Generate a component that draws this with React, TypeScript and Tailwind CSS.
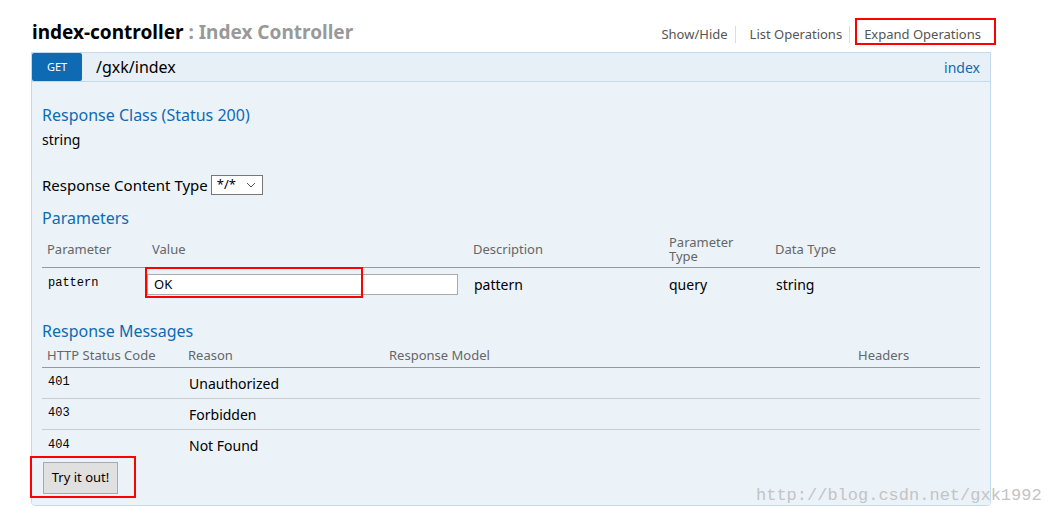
import React from "react";

const headCell = "pl-[5px] text-[13px] text-[#666] leading-[14px]";
const mono = "font-['Liberation_Mono',monospace] text-[12px] text-black";

function RedBox({ className }: { className: string }) {
  return <div className={`absolute border-2 border-[#ff0000] pointer-events-none ${className}`} />;
}

const messages = [
  { code: "401", reason: "Unauthorized" },
  { code: "403", reason: "Forbidden" },
  { code: "404", reason: "Not Found" },
];

export default function App() {
  return (
    <div className="relative w-[1050px] h-[516px] overflow-hidden bg-white font-['Noto_Sans',sans-serif] text-[#333]">
      <div className="ml-[31px] w-[960px] pt-[20px]">
        {/* resource heading */}
        <div className="flex items-baseline justify-between mb-[8px] h-[24px]">
          <h2 className="pl-[1px] text-[19px] leading-[24px] font-bold text-black">
            index-controller
            <span className="text-[#999]"> : Index Controller</span>
          </h2>
          <div className="flex items-center text-[13px] leading-[17px] text-[#555]">
            <span className="pr-[7px]">Show/Hide</span>
            <span className="pl-[14px] pr-[7px] border-l border-[#ddd]">List Operations</span>
            <span className="pl-[14px] pr-[10px] border-l border-[#ddd]">Expand Operations</span>
          </div>
        </div>

        {/* operation panel */}
        <div className="border border-[#c3d9ec] rounded-b-[4px] overflow-hidden">
          <div className="flex items-center h-[29px] bg-[#e7f0f7] border-b border-[#c3d9ec]">
            <span className="flex items-center justify-center w-[50px] h-[28px] bg-[#0f6ab4] rounded-[2px] text-white text-[11px]">
              GET
            </span>
            <span className="ml-[14px] text-[16px] text-black">/gxk/index</span>
            <span className="ml-auto pr-[10px] text-[14px] text-[#0f6ab4]">index</span>
          </div>

          <div className="bg-[#ebf3f9] px-[10px] pt-[23px] pb-[11px]">
            <h4 className="text-[16px] leading-[20px] text-[#0f6ab4]">Response Class (Status 200)</h4>
            <p className="mt-[5px] text-[14px] leading-[20px] text-black">string</p>

            <div className="mt-[25px] flex items-center h-[20px] text-[15px] text-black">
              <span>Response Content Type</span>
              <span className="ml-[3px] flex items-center w-[52px] h-[20px] border border-[#777] bg-white pl-[5px] text-[13px]">
                */*
                <svg className="ml-auto mr-[6px]" width="10" height="6" viewBox="0 0 10 6" fill="none">
                  <path d="M1 1l4 4 4-4" stroke="#555" strokeWidth="1" />
                </svg>
              </span>
            </div>

            <h4 className="mt-[13px] text-[16px] leading-[20px] text-[#0f6ab4]">Parameters</h4>
            <div className="grid grid-cols-[105px_321px_196px_106px_1fr] items-center h-[40px] pt-[3px] border-b border-[#999]">
              <span className={headCell}>Parameter</span>
              <span className={headCell}>Value</span>
              <span className={headCell}>Description</span>
              <span className={`${headCell} leading-[13px]`}>
                Parameter
                <br />
                Type
              </span>
              <span className={headCell}>Data Type</span>
            </div>
            <div className="grid grid-cols-[105px_321px_196px_106px_1fr] items-center h-[32px] text-[14px] text-black">
              <span className={`pl-[6px] ${mono} -mt-[3px]`}>pattern</span>
              <input
                readOnly
                value="OK"
                className="w-[311px] h-[21px] border border-[#aaa] bg-white px-[6px] text-[13px] text-black outline-none"
              />
              <span className="pl-[6px]">pattern</span>
              <span className="pl-[5px]">query</span>
              <span className="pl-[6px]">string</span>
            </div>

            <h4 className="mt-[21px] text-[16px] leading-[20px] text-[#0f6ab4]">Response Messages</h4>
            <div className="grid grid-cols-[141px_201px_469px_1fr] items-center h-[27px] pt-[1px] border-b border-[#999]">
              <span className={headCell}>HTTP Status Code</span>
              <span className={headCell}>Reason</span>
              <span className={headCell}>Response Model</span>
              <span className={headCell}>Headers</span>
            </div>
            {messages.map((m, i) => (
              <div
                key={m.code}
                className={`grid grid-cols-[141px_201px_469px_1fr] items-center h-[31px] text-[14px] text-black ${
                  i < messages.length - 1 ? "border-b border-[#ccc]" : ""
                }`}
              >
                <span className={`pl-[6px] ${mono} -mt-[2px]`}>{m.code}</span>
                <span className="pl-[6px]">{m.reason}</span>
                <span />
                <span />
              </div>
            ))}

            <button className="mt-[1px] ml-[1px] w-[75px] h-[32px] bg-[#e0e0e0] border border-[#aaa] text-[13px] text-black">
              Try it out!
            </button>
          </div>
        </div>
      </div>

      <span className="absolute left-[756px] top-[484px] font-['Liberation_Mono',monospace] text-[17px] leading-[24px] text-[#c4c4c4]">
        http://blog.csdn.net/gxk1992
      </span>

      <RedBox className="left-[855px] top-[18px] w-[141px] h-[27px]" />
      <RedBox className="left-[145px] top-[267px] w-[218px] h-[31px]" />
      <RedBox className="left-[30px] top-[456px] w-[106px] h-[42px]" />
    </div>
  );
}
